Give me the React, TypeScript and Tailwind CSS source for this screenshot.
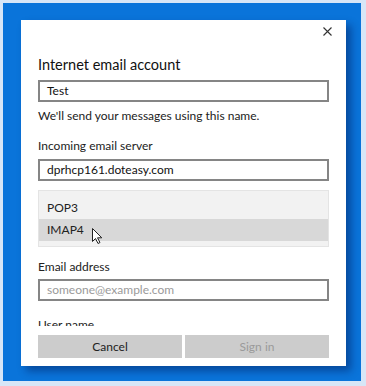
import React from 'react';

const font = { fontFamily: 'Lato, "Open Sans", sans-serif' };

const Field: React.FC<{ value?: string; placeholder?: string; className?: string }> = ({ value, placeholder, className }) => (
    <div className={`h-[22px] border-2 border-[#858585] bg-white flex items-center pl-[7px] text-[12px] ${className ?? ''}`}>
        {value ? <span className="text-[#111]">{value}</span> : <span className="text-[#9a9a9a]">{placeholder}</span>}
    </div>
);

const Cursor = () => (
    <svg width="11" height="17" viewBox="0 0 11 17" className="absolute left-[53px] top-[9px]">
        <path d="M0.5 0.5 L0.5 13.5 L3.5 10.5 L6 15.5 L8 14.5 L5.5 9.8 L9.8 9.8 Z" fill="#fff" stroke="#222" strokeWidth="1" strokeLinejoin="round" />
    </svg>
);

const App: React.FC = () => {
    return (
        <div className="w-[366px] h-[386px] bg-[#d7e6f7] p-[3px]" style={font}>
            <div className="w-[358px] h-[378px] bg-[#0a74da] pt-[17px] pl-[18px]">
                <div className="w-[325px] h-[346px] bg-white flex flex-col shadow-[5px_5px_8px_rgba(0,20,80,0.45)]">
                    {/* Scrollable content */}
                    <div className="h-[306px] overflow-hidden px-[17px]">
                        {/* Close */}
                        <div className="h-[22px] flex justify-end items-center -mr-[3px]">
                            <svg width="9" height="9" viewBox="0 0 9 9">
                                <path d="M0.5 0.5 L8.5 8.5 M8.5 0.5 L0.5 8.5" stroke="#333" strokeWidth="1.1" />
                            </svg>
                        </div>

                        <h1 className="mt-[13px] h-[20px] leading-[20px] text-[14.5px] text-[#111]">Internet email account</h1>
                        <Field value="Test" className="mt-[5px]" />
                        <p className="mt-[6px] h-[16px] leading-[16px] text-[12px] text-[#222]">We'll send your messages using this name.</p>

                        <p className="mt-[14px] h-[16px] leading-[16px] text-[12px] text-[#222]">Incoming email server</p>
                        <Field value="dprhcp161.doteasy.com" className="mt-[5px]" />

                        {/* Account type list */}
                        <div className="mt-[9px] h-[57px] border border-[#e4e4e4] bg-[#f2f2f2] pt-[6px]">
                            <div className="h-[22px] flex items-center pl-[8px] text-[12px] text-[#222]">POP3</div>
                            <div className="relative h-[22px] flex items-center pl-[8px] text-[12px] text-[#222] bg-[#d8d8d8]">
                                IMAP4
                                <Cursor />
                            </div>
                        </div>

                        <p className="mt-[12px] h-[16px] leading-[16px] text-[12px] text-[#222]">Email address</p>
                        <Field placeholder="someone@example.com" className="mt-[4px]" />

                        <p className="mt-[16px] h-[16px] leading-[16px] text-[12px] text-[#222]">User name</p>
                    </div>

                    {/* Buttons */}
                    <div className="mt-[9px] px-[17px] grid grid-cols-2 gap-[3px]">
                        <button className="h-[23px] bg-[#cccccc] text-[12px] text-[#222]">Cancel</button>
                        <button className="h-[23px] bg-[#cccccc] text-[12px] text-[#9a9a9a]">Sign in</button>
                    </div>
                </div>
            </div>
        </div>
    );
};

export default App;
